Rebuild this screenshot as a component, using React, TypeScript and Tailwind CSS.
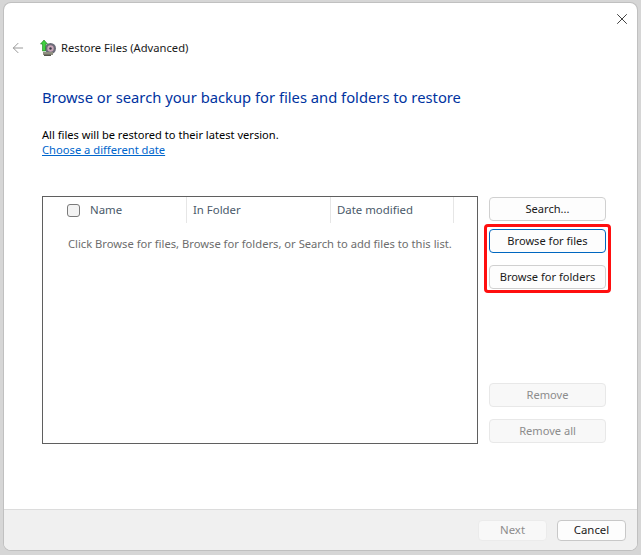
import React from 'react';
import { ArrowLeft, X } from 'lucide-react';

const font = { fontFamily: '"Noto Sans", "Open Sans", sans-serif' };

const SideButton = ({ label, disabled, focused }: { label: string; disabled?: boolean; focused?: boolean }) => {
    let cls = 'border-[#d0d0d0] bg-[#fdfdfd] text-[#1a1a1a]';
    if (disabled) cls = 'border-[#e8e8e8] bg-[#f8f8f8] text-[#8c8c8c]';
    if (focused) cls = 'border-[#0067c0] bg-[#fdfdfd] text-[#1a1a1a]';
    return (
        <div className={`w-[117px] h-[24px] border rounded-[4px] flex items-center justify-center text-[11.1px] ${cls}`}>
            {label}
        </div>
    );
};

const RestoreIcon = () => (
    <svg width="17" height="18" viewBox="0 0 17 18">
        <circle cx="10.5" cy="9.5" r="5.5" fill="#6b6b78" />
        <circle cx="10.5" cy="9.5" r="3.2" fill="#c9a6b8" />
        <circle cx="10.5" cy="9.5" r="1.2" fill="#3a3a48" />
        <path d="M3 13h10v3H3z" fill="#8f8f80" />
        <path d="M4 15.5h7v1.5H4z" fill="#55554c" />
        <path d="M4 1 L7.5 5 H5.5 V12 H2.5 V5 H0.5 Z" fill="#3fd03f" stroke="#1f7a1f" strokeWidth="0.6" />
    </svg>
);

const App = () => {
    return (
        <div className="w-[641px] h-[555px] bg-[#d6d6d6] pt-[3px] pl-[4px] pr-[4px] pb-[5px]" style={font}>
            <div className="w-full h-full bg-white rounded-[7px] overflow-hidden flex flex-col shadow-[0_0_0_1px_#c0c0c0]">
                <div className="flex justify-end pt-[7px] pr-[6px] h-[29px]">
                    <X size={18} strokeWidth={1.1} className="text-[#1a1a1a]" />
                </div>

                <div className="flex items-center h-[32px] pl-[6px]">
                    <ArrowLeft size={16} strokeWidth={1.5} className="text-[#9a9a9a]" />
                    <div className="ml-[14px]"><RestoreIcon /></div>
                    <span className="ml-[4px] text-[11.2px] text-[#1a1a1a]">Restore Files (Advanced)</span>
                </div>

                <div className="flex-1 pl-[38px] pr-[31px]">
                    <h1 className="text-[14.75px] leading-[20px] font-normal text-[#0033a0] mt-[23px]">
                        Browse or search your backup for files and folders to restore
                    </h1>
                    <p className="text-[11.1px] leading-[15px] text-black mt-[20px]">All files will be restored to their latest version.</p>
                    <a className="block w-fit text-[11.2px] leading-[15px] text-[#0066cc] underline">Choose a different date</a>

                    <div className="flex justify-between mt-[39px]">
                        <div className="w-[436px] h-[248px] border border-[#5f5f5f]">
                            <div className="flex h-[26px] text-[11.4px] text-[#4a5a6a]">
                                <div className="w-[144px] flex items-center pl-[24px] border-r border-[#e6e6e6]">
                                    <span className="w-[13px] h-[13px] border border-[#7a7a7a] rounded-[3px] bg-[#f3f3f3]" />
                                    <span className="ml-[10px]">Name</span>
                                </div>
                                <div className="w-[144px] flex items-center pl-[6px] border-r border-[#e6e6e6]">In Folder</div>
                                <div className="w-[123px] flex items-center pl-[6px] border-r border-[#e6e6e6]">Date modified</div>
                            </div>
                            <p className="text-[11.2px] leading-[15px] text-[#6d6d6d] pl-[25px] mt-[13px] whitespace-nowrap">
                                Click Browse for files, Browse for folders, or Search to add files to this list.
                            </p>
                        </div>

                        <div className="flex flex-col w-[117px] pt-[1px]">
                            <SideButton label="Search..." />
                            <div className="relative flex flex-col gap-[12px] mt-[8px]">
                                <SideButton label="Browse for files" focused />
                                <SideButton label="Browse for folders" />
                                {/* red highlight drawn over the screenshot */}
                                <div className="absolute -inset-x-[5px] -top-[5px] -bottom-[4px] border-[3px] border-[#ff0f0f] rounded-[4px]" />
                            </div>
                            <div className="flex flex-col gap-[12px] mt-[94px]">
                                <SideButton label="Remove" disabled />
                                <SideButton label="Remove all" disabled />
                            </div>
                        </div>
                    </div>
                </div>

                <div className="h-[41px] bg-[#f0f0f0] border-t border-[#dcdcdc] flex justify-end items-center gap-[10px] pr-[11px]">
                    <div className="w-[69px] h-[21px] border border-[#ebebeb] rounded-[4px] bg-[#f8f8f8] text-[#8c8c8c] text-[11.4px] flex items-center justify-center">Next</div>
                    <div className="w-[69px] h-[21px] border border-[#c8c8c8] rounded-[4px] bg-[#fdfdfd] text-[#1a1a1a] text-[11.4px] flex items-center justify-center">Cancel</div>
                </div>
            </div>
        </div>
    );
};

export default App;
